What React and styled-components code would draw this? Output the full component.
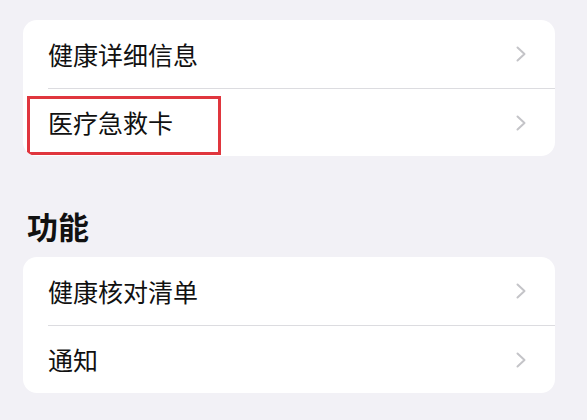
import React from "react";
import styled, { createGlobalStyle } from "styled-components";

const Global = createGlobalStyle`
  html, body { margin: 0; padding: 0; background: #f2f1f6; }
  body { font-family: "Noto Sans CJK SC", "Noto Sans", sans-serif; -webkit-font-smoothing: antialiased; }
`;

const Page = styled.div`
  width: 587px;
  height: 420px;
  box-sizing: border-box;
  padding: 20px 32px 0 23px;
  background: #f2f1f6;
  overflow: hidden;
`;

const Card = styled.div`
  background: #ffffff;
  border-radius: 14px;
  overflow: hidden;
`;

const Row = styled.div`
  position: relative;
  height: 68px;
  display: flex;
  align-items: center;
  padding-left: 25px;
  box-sizing: border-box;
`;

const RowInner = styled.div`
  flex: 1;
  height: 100%;
  display: flex;
  align-items: center;
  justify-content: space-between;
  box-sizing: border-box;
  border-top: ${(p) => (p.$divider ? "1px solid #dcdce0" : "none")};
  padding-right: 28px;
`;

const Label = styled.span`
  font-size: 25px;
  color: #111111;
  line-height: 1;
`;

const Heading = styled.h2`
  margin: 0;
  padding: 52px 0 13px 4px;
  font-size: 31px;
  font-weight: 700;
  color: #111111;
  line-height: 36px;
`;

const Highlight = styled.div`
  position: absolute;
  left: 4px;
  top: 8px;
  width: 194px;
  height: 59px;
  box-sizing: border-box;
  border: 3px solid #e0363e;
  pointer-events: none;
`;

const Chevron = () => (
  <svg width="12" height="18" viewBox="0 0 12 18">
    <polyline
      points="2.5,2.5 9.5,9 2.5,15.5"
      fill="none"
      stroke="#c4c4c8"
      strokeWidth="2"
      strokeLinecap="round"
      strokeLinejoin="round"
    />
  </svg>
);

const Item = ({ label, divider, highlight }) => (
  <Row>
    {highlight && <Highlight />}
    <RowInner $divider={divider}>
      <Label>{label}</Label>
      <Chevron />
    </RowInner>
  </Row>
);

export default function App() {
  return (
    <>
      <Global />
      <Page>
        <Card>
          <Item label="健康详细信息" />
          <Item label="医疗急救卡" divider highlight />
        </Card>
        <Heading>功能</Heading>
        <Card>
          <Item label="健康核对清单" />
          <Item label="通知" divider />
        </Card>
      </Page>
    </>
  );
}
